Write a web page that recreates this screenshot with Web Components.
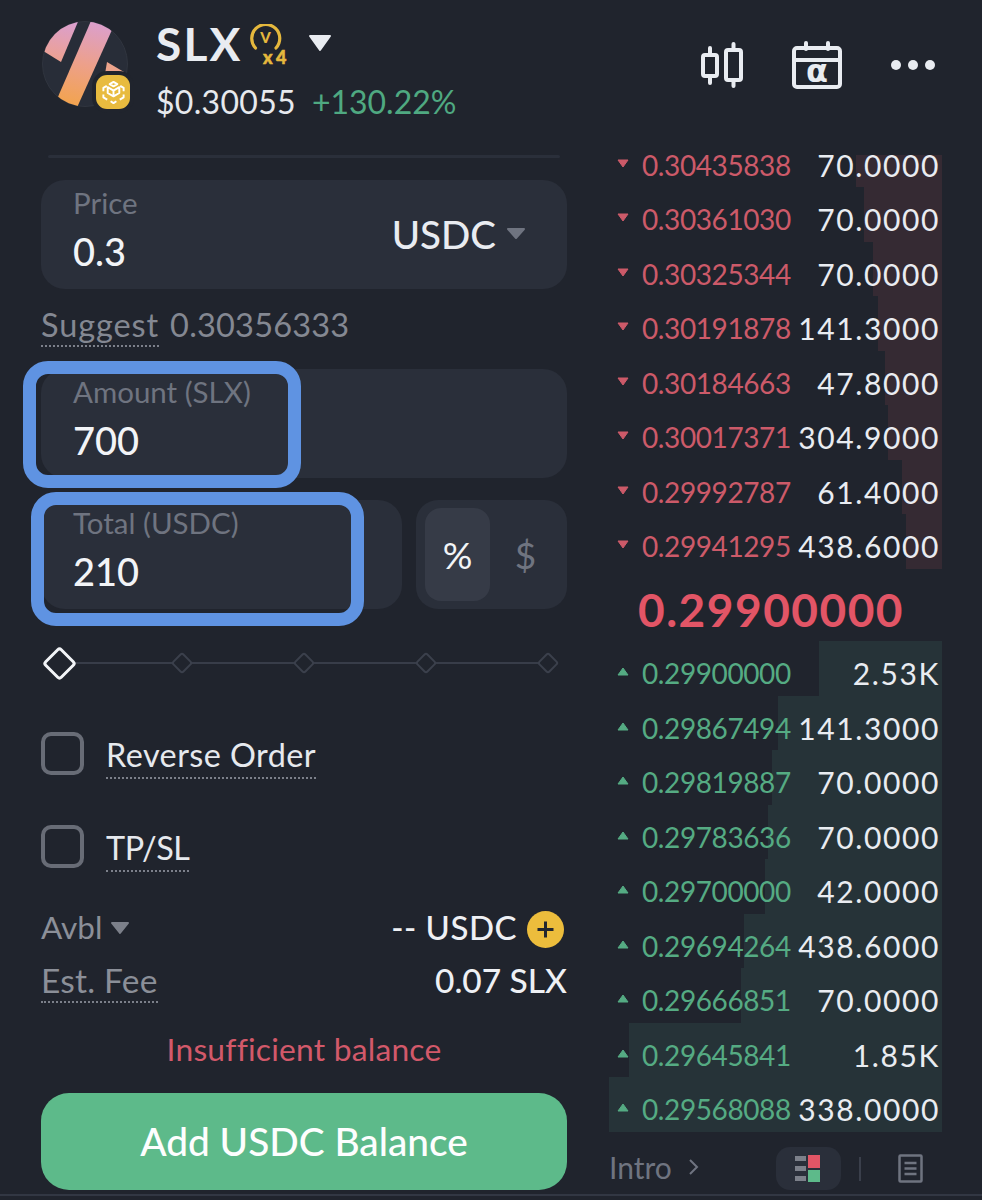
<!DOCTYPE html>
<html>
<head>
<meta charset="utf-8">
<title>SLX</title>
<style>
  html, body { margin: 0; padding: 0; background: #20242d; }
  body { font-family: Lato, "Liberation Sans", sans-serif; color: #e9ecf1; }
</style>
</head>
<body>
<trade-page>
  <coin-header slot="header" symbol="SLX" price="$0.30055" change="+130.22%"></coin-header>
  <order-form slot="form">
    <order-field label="Price" value="0.3"><span slot="side" class="unit">USDC <svg width="20" height="13" viewBox="0 0 20 13"><path d="M2 2h16l-8 9z" fill="#6f7480" stroke="#6f7480" stroke-width="2" stroke-linejoin="round"/></svg></span></order-field>
    <hint-row></hint-row>
    <order-field label="Amount (SLX)" value="700"><focus-ring slot="over" style="left:-18px;top:-8px;width:278px;height:127px"></focus-ring></order-field>
    <div class="total-row">
      <order-field label="Total (USDC)" value="210"><focus-ring slot="over" style="left:-10px;top:-8px;width:333px;height:134px"></focus-ring></order-field>
      <unit-toggle></unit-toggle>
    </div>
    <step-slider></step-slider>
    <check-row label="Reverse Order" style="margin-top:51px"></check-row>
    <check-row label="TP/SL" style="margin-top:50px;--ls:-.5px"></check-row>
    <balance-info></balance-info>
    <submit-bar message="Insufficient balance" action="Add USDC Balance"></submit-bar>
  </order-form>
  <depth-book slot="book"></depth-book>
</trade-page>

<script>
class TradePage extends HTMLElement {
  constructor() {
    super();
    this.attachShadow({mode: 'open'}).innerHTML = `
      <style>
        :host { display: block; width: 982px; height: 1200px; overflow: hidden; background: #20242d; }
        .main { display: flex; height: 1039px; }
        .left { width: 526px; margin-left: 41px; }
        .right { width: 333px; margin-left: 42px; }
        .line { height: 2px; background: #323743; }
      </style>
      <slot name="header"></slot>
      <div class="main">
        <div class="left"><slot name="form"></slot></div>
        <div class="right"><slot name="book"></slot></div>
      </div>
      <div class="line"></div>`;
  }
}

class CoinHeader extends HTMLElement {
  constructor() {
    super();
    const a = n => this.getAttribute(n);
    this.attachShadow({mode: 'open'}).innerHTML = `
      <style>
        :host { display: flex; height: 155px; box-sizing: border-box; padding: 20px 0 0 42px; }
        .logo { position: relative; width: 88px; height: 90px; flex: none; }
        .logo svg { display: block; }
        .chain { position: absolute; left: 54px; top: 55px; width: 34px; height: 34px; border-radius: 11px; background: #e8bb3f; box-shadow: 0 0 0 4px #20242d; display: flex; align-items: center; justify-content: center; }
        .info { margin-left: 26px; padding-top: 1px; }
        .top { display: flex; align-items: flex-start; height: 48px; }
        .sym { font-size: 46px; font-weight: 700; line-height: 46px; color: #e9ecf1; letter-spacing: 2.2px; }
        .vip { margin-left: 4px; margin-top: 3px; display: block; }
        .caret { margin-left: 14px; margin-top: 13px; display: block; }
        .sub { display: flex; gap: 16px; font-size: 32px; line-height: 38px; margin-top: 14px; }
        .price { color: #e6e9ee; letter-spacing: .3px; }
        .change { color: #4fa981; }
        .actions { margin-left: auto; display: flex; align-items: center; height: 90px; margin-right: 46px; }
        .actions svg { display: block; }
        .cal { margin-left: 49px; }
        .more { margin-left: 48px; }
      </style>
      <div class="logo">
        <svg width="88" height="88" viewBox="0 0 88 88">
          <defs>
            <linearGradient id="g" x1="0.45" y1="0" x2="0.3" y2="1">
              <stop offset="0" stop-color="#d99fd4"/><stop offset=".5" stop-color="#eda08a"/><stop offset="1" stop-color="#f3a445"/>
            </linearGradient>
            <linearGradient id="h" x1="0.6" y1="0" x2="0.4" y2="1">
              <stop offset="0" stop-color="#d99fd4"/><stop offset="1" stop-color="#eea18e"/>
            </linearGradient>
            <clipPath id="c"><circle cx="43" cy="44" r="42.5"/></clipPath>
          </defs>
          <circle cx="43" cy="44" r="42.5" fill="#282d38" stroke="#30353f" stroke-width="1"/>
          <g clip-path="url(#c)">
            <polygon points="52,-6 74,1 33,92 12,86" fill="url(#g)"/>
            <polygon points="38,-3 19,42 -2,29 -2,-3" fill="url(#h)"/>
            <polygon points="65,42 82,52 62,60" fill="#eda48c"/>
          </g>
        </svg>
        <div class="chain">
          <svg width="27" height="27" viewBox="0 0 28 28" fill="none" stroke="#fff" stroke-width="2" stroke-linejoin="round">
            <path d="M14 3l4 2.3-4 2.3-4-2.3z M21 7.2l3.500 2v3.500 M7 7.200l-3.500 2v3.500 M14 12l6-3.500v6L14 18zM14 12l-6-3.500v6L14 18z M3.500 16v3l4 2.300 M24.500 16v3l-4 2.300 M11 23l3 2 3-2"/>
          </svg>
        </div>
      </div>
      <div class="info">
        <div class="top">
          <span class="sym">${a('symbol')}</span>
          <svg class="vip" width="46" height="45" viewBox="0 0 46 45">
            <path d="M8.500 24A14 14 0 1 1 29 24" fill="none" stroke="#e5b83d" stroke-width="3.200" stroke-linecap="round"/>
            <text x="18.500" y="19" text-anchor="middle" font-family="Lato, sans-serif" font-weight="900" font-size="15" fill="#e5b83d">V</text>
            <text x="16" y="40" font-family="Lato, sans-serif" font-weight="900" font-size="18" letter-spacing="3.500" fill="#e5b83d" stroke="#e5b83d" stroke-width=".5">x4</text>
          </svg>
          <svg class="caret" width="26" height="18" viewBox="0 0 26 18"><path d="M3 2h20l-10 14z" fill="#e9ecf1" stroke="#e9ecf1" stroke-width="2" stroke-linejoin="round"/></svg>
        </div>
        <div class="sub"><span class="price">${a('price')}</span><span class="change">${a('change')}</span></div>
      </div>
      <div class="actions">
        <svg width="42" height="46" viewBox="0 0 42 46" fill="none" stroke="#e9ecf1" stroke-width="4" stroke-linecap="round" stroke-linejoin="round">
          <rect x="2" y="13" width="14" height="21" rx="2"/><path d="M9 6v7M9 34v7"/>
          <rect x="25" y="8" width="15" height="30" rx="2"/><path d="M32.500 2v6M32.500 38v6"/>
        </svg>
        <svg class="cal" width="50" height="48" viewBox="0 0 50 48" fill="none" stroke="#e9ecf1" stroke-width="4" stroke-linecap="round" stroke-linejoin="round">
          <rect x="2" y="7" width="46" height="39" rx="3"/><path d="M2 19h46M14 2v6M36 2v6" />
          <text x="25" y="41" text-anchor="middle" font-family="'DejaVu Sans', sans-serif" font-weight="700" font-size="32" fill="#e9ecf1" stroke="none">α</text>
        </svg>
        <svg class="more" width="46" height="12" viewBox="0 0 46 12" fill="#e9ecf1"><circle cx="6" cy="6" r="5"/><circle cx="23" cy="6" r="5"/><circle cx="40" cy="6" r="5"/></svg>
      </div>`;
  }
}

class OrderForm extends HTMLElement {
  constructor() {
    super();
    this.attachShadow({mode: 'open'}).innerHTML = `
      <style>
        :host { display: block; }
        .rule { height: 3px; margin: 0 7px 22px; background: #2a2f3a; border-radius: 2px; }
        ::slotted(.total-row) { display: flex; gap: 14px; margin-top: 22px; }
      </style>
      <div class="rule"></div>
      <slot></slot>`;
  }
}

class OrderField extends HTMLElement {
  constructor() {
    super();
    this.attachShadow({mode: 'open'}).innerHTML = `
      <style>
        :host { display: flex; position: relative; box-sizing: border-box; height: 109px; flex: 1; align-items: center; justify-content: space-between; padding: 0 41px 0 32px; background: #2a2f3a; border-radius: 24px; }
        .text { margin-bottom: 10px; }
        .label { font-size: 29.500px; line-height: 32px; color: #6f7480; margin-bottom: 11px; }
        .value { font-size: 38px; font-weight: 500; line-height: 42px; color: #f2f4f7; }
        ::slotted(.unit) { font-size: 38.500px; font-weight: 500; color: #e9ecf1; display: flex; align-items: center; gap: 10px; margin-top: -2px; }
      </style>
      <div class="text">
        <div class="label">${this.getAttribute('label')}</div>
        <div class="value">${this.getAttribute('value')}</div>
      </div>
      <slot name="side"></slot>
      <slot name="over"></slot>`;
  }
}

class FocusRing extends HTMLElement {
  constructor() {
    super();
    this.attachShadow({mode: 'open'}).innerHTML = `
      <style>
        :host { position: absolute; box-sizing: border-box; border: 13px solid #5f93e2; border-radius: 25px; pointer-events: none; }
      </style>`;
  }
}

class HintRow extends HTMLElement {
  constructor() {
    super();
    this.attachShadow({mode: 'open'}).innerHTML = `
      <style>
        :host { display: flex; height: 38px; margin: 20px 0 22px; gap: 11px; font-size: 32.500px; line-height: 31px; color: #848892; }
        .tip { height: 38px; box-sizing: border-box; border-bottom: 2px dotted #7c808a; letter-spacing: .9px; }
        .num { letter-spacing: .2px; }
      </style>
      <span class="tip">Suggest</span><span class="num">0.30356333</span>`;
  }
}

class UnitToggle extends HTMLElement {
  constructor() {
    super();
    this.attachShadow({mode: 'open'}).innerHTML = `
      <style>
        :host { display: flex; box-sizing: border-box; width: 151px; height: 109px; flex: none; padding: 8px 9px; background: #2a2f3a; border-radius: 22px; }
        div { display: flex; align-items: center; justify-content: center; font-size: 37px; width: 65px; border-radius: 16px; }
        .on { background: #363b47; color: #f2f4f7; }
        .off { margin-left: 3px; color: #6f7480; }
      </style>
      <div class="on">%</div><div class="off">$</div>`;
  }
}

class StepSlider extends HTMLElement {
  constructor() {
    super();
    this.attachShadow({mode: 'open'}).innerHTML = `
      <style>
        :host { display: flex; position: relative; gap: 86px; height: 36px; margin-top: 36px; padding-left: .5px; }
        .track { position: absolute; left: 24px; width: 480px; top: 17px; height: 2px; background: #383d49; }
        .cell { position: relative; width: 36px; height: 36px; display: flex; align-items: center; justify-content: center; }
        .cell i { display: block; box-sizing: border-box; width: 16px; height: 16px; border: 2px solid #3b404c; border-radius: 3px; background: #20242d; transform: rotate(45deg); }
        .cell.on i { width: 25px; height: 25px; border: 3.500px solid #f2f4f7; border-radius: 4px; }
      </style>
      <div class="track"></div>
      <div class="cell on"><i></i></div><div class="cell"><i></i></div><div class="cell"><i></i></div><div class="cell"><i></i></div><div class="cell"><i></i></div>`;
  }
}

class CheckRow extends HTMLElement {
  constructor() {
    super();
    this.attachShadow({mode: 'open'}).innerHTML = `
      <style>
        :host { display: flex; align-items: flex-start; gap: 22px; height: 43px; }
        .box { box-sizing: border-box; width: 43px; height: 43px; border: 4px solid #686c76; border-radius: 10px; }
        .text { font-size: 32.400px; line-height: 40px; height: 47px; box-sizing: border-box; padding-top: 3px; color: #e6e9ee; border-bottom: 2px dotted #7c808a; letter-spacing: var(--ls, .45px); }
      </style>
      <div class="box"></div><span class="text">${this.getAttribute('label')}</span>`;
  }
}

class BalanceInfo extends HTMLElement {
  constructor() {
    super();
    this.attachShadow({mode: 'open'}).innerHTML = `
      <style>
        :host { display: block; margin-top: 43px; }
        .row { display: flex; justify-content: space-between; align-items: center; height: 36px; font-size: 33px; color: #8b8f98; }
        .row span { line-height: 33px; }
        .row.fee { height: 43px; align-items: flex-start; margin-top: 13px; }
        .left { display: flex; align-items: center; gap: 8px; font-size: 31.500px; margin-top: -3px; }
        .tip { height: 43px; box-sizing: border-box; border-bottom: 2px dotted #7c808a; letter-spacing: .2px; }
        .val { color: #eef0f4; font-weight: 500; display: flex; align-items: center; gap: 10px; }
        .usdc { letter-spacing: .5px; margin-top: -3px; }
        .fee .val { line-height: 40px; font-size: 33.500px; }
        .fee .tip { line-height: 40px; font-size: 33.500px; }
        .plus { width: 37px; height: 37px; margin-right: 3px; margin-top: 0; }
      </style>
      <div class="row">
        <span class="left">Avbl <svg width="20" height="14" viewBox="0 0 20 14"><path d="M2 2h16l-8 10z" fill="#7c808a" stroke="#7c808a" stroke-width="2" stroke-linejoin="round"/></svg></span>
        <span class="val"><span class="usdc">-- USDC</span> <svg class="plus" viewBox="0 0 37 37"><circle cx="18.500" cy="18.500" r="18.500" fill="#ecbd3c"/><path d="M18.500 10.500v16M10.500 18.500h16" stroke="#22262e" stroke-width="3"/></svg></span>
      </div>
      <div class="row fee"><span class="tip">Est. Fee</span><span class="val">0.07 SLX</span></div>`;
  }
}

class SubmitBar extends HTMLElement {
  constructor() {
    super();
    this.attachShadow({mode: 'open'}).innerHTML = `
      <style>
        :host { display: block; margin-top: 30px; }
        .msg { height: 34px; line-height: 32px; text-align: center; font-size: 31.800px; color: #d2596a; letter-spacing: .2px; }
        button { display: block; width: 100%; height: 97px; margin-top: 26px; padding: 0 0 1px; border: none; border-radius: 28px; background: #5dba8a; color: #fdfefe; font: 500 38.800px Lato, "Liberation Sans", sans-serif; }
      </style>
      <div class="msg">${this.getAttribute('message')}</div>
      <button>${this.getAttribute('action')}</button>`;
  }
}

class BookRow extends HTMLElement {
  constructor() {
    super();
    const a = n => this.getAttribute(n);
    const up = a('side') === 'bid';
    this.attachShadow({mode: 'open'}).innerHTML = `
      <style>
        :host { display: flex; position: relative; align-items: flex-end; box-sizing: border-box; height: 54.500px; padding: 0 2px 7.500px 8px; line-height: 30px; }
        :host([first]) { height: 32px; }
        .bar { position: absolute; right: 0; top: 0; bottom: 0; background: ${up ? '#263338' : '#352a33'}; }
        svg { position: relative; display: block; margin: 0 13px 12px 0; flex: none; }
        .price { position: relative; font-size: 28px; color: ${up ? '#55ab83' : '#cc5a69'}; letter-spacing: -.4px; }
        .qty { position: relative; margin-left: auto; font-size: 30px; letter-spacing: 1.600px; color: #e9ecf1; }
      </style>
      <div class="bar" style="width:${a('bar')}px"></div>
      <svg width="12" height="9" viewBox="0 0 12 9"><path d="${up ? 'M1 8h10L6 1z' : 'M1 1h10L6 8z'}" fill="${up ? '#55ab83' : '#cc5a69'}" stroke="${up ? '#55ab83' : '#cc5a69'}" stroke-linejoin="round"/></svg>
      <span class="price">${a('price')}</span><span class="qty">${a('qty')}</span>`;
  }
}

class DepthBook extends HTMLElement {
  constructor() {
    super();
    const asks = [['0.30435838','70.0000',86],['0.30361030','70.0000',78],['0.30325344','70.0000',69],['0.30191878','141.3000',64],['0.30184663','47.8000',57],['0.30017371','304.9000',54],['0.29992787','61.4000',40],['0.29941295','438.6000',36]];
    const bids = [['0.29900000','2.53K',123],['0.29867494','141.3000',164],['0.29819887','70.0000',170],['0.29783636','70.0000',174],['0.29700000','42.0000',177],['0.29694264','438.6000',198],['0.29666851','70.0000',201],['0.29645841','1.85K',313],['0.29568088','338.0000',333]];
    const row = (side, r, i) => `<book-row side="${side}" price="${r[0]}" qty="${r[1]}" bar="${r[2]}"${side === 'ask' && i === 0 ? ' first' : ''}></book-row>`;
    this.attachShadow({mode: 'open'}).innerHTML = `
      <style>
        :host { display: block; }
        .mid { height: 72.500px; box-sizing: border-box; padding: 19px 0 0 29px; font-size: 46px; font-weight: 700; line-height: 44px; letter-spacing: 1.500px; color: #e25566; }
        .foot { display: flex; align-items: center; height: 43px; margin-top: 15.500px; color: #6f7480; font-size: 30px; }
        .intro { display: flex; align-items: center; gap: 16px; margin-top: -3px; }
        .tab { display: flex; align-items: center; justify-content: center; width: 65px; height: 43px; margin-left: 77px; border-radius: 14px; background: #2a2f3a; }
        .sep { width: 2px; height: 24px; margin: 0 37px 0 18px; background: #3a3f4b; }
        svg { display: block; }
      </style>
      ${asks.map((r, i) => row('ask', r, i)).join('')}
      <div class="mid">0.29900000</div>
      ${bids.map((r, i) => row('bid', r, i)).join('')}
      <div class="foot">
        <span class="intro">Intro <svg width="11" height="18" viewBox="0 0 11 18" fill="none" stroke="#6f7480" stroke-width="2"><path d="M2 2l7 7-7 7"/></svg></span>
        <div class="tab">
          <svg width="26" height="27" viewBox="0 0 26 27">
            <rect x="0" y="1" width="11" height="5" fill="#7c808a"/><rect x="0" y="11" width="11" height="5" fill="#7c808a"/><rect x="0" y="21" width="11" height="5" fill="#7c808a"/>
            <rect x="13" y="0" width="12" height="13" fill="#e25566"/><rect x="13" y="15" width="12" height="12" fill="#5dba8a"/>
          </svg>
        </div>
        <div class="sep"></div>
        <svg width="25" height="29" viewBox="0 0 25 29" fill="none" stroke="#6f7480" stroke-width="2.500">
          <rect x="1.500" y="1.500" width="22" height="26" rx="1"/><path d="M6.500 9h12M6.500 14.500h12M6.500 20h12"/>
        </svg>
      </div>`;
  }
}

customElements.define('trade-page', TradePage);
customElements.define('coin-header', CoinHeader);
customElements.define('order-form', OrderForm);
customElements.define('order-field', OrderField);
customElements.define('focus-ring', FocusRing);
customElements.define('hint-row', HintRow);
customElements.define('unit-toggle', UnitToggle);
customElements.define('step-slider', StepSlider);
customElements.define('check-row', CheckRow);
customElements.define('balance-info', BalanceInfo);
customElements.define('submit-bar', SubmitBar);
customElements.define('book-row', BookRow);
customElements.define('depth-book', DepthBook);
</script>
</body>
</html>
